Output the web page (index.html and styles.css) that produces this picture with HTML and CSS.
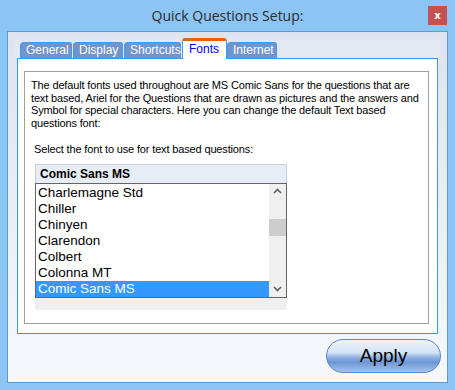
FILE: index.html
```html
<!DOCTYPE html>
<html lang="en">
  <head>
    <meta charset="UTF-8" />
    <title>Quick Questions Setup</title>
    <link rel="stylesheet" href="styles.css">
  </head>
  <body>
    <div class="window">
      <div class="titlebar">
        <span></span>
        <h1 class="title">Quick Questions Setup:</h1>
        <button class="close-button">x</button>
      </div>
      <div class="client">
        <div class="tabs">
          <div class="tab tab-general">General</div>
          <div class="tab tab-display">Display</div>
          <div class="tab tab-shortcuts">Shortcuts</div>
          <div class="tab tab-fonts active">Fonts</div>
          <div class="tab tab-internet">Internet</div>
        </div>
        <div class="panel">
          <div class="group">
            <p class="intro">
              The default fonts used throughout are MS Comic Sans for the questions that are
              text based, Ariel for the Questions that are drawn as pictures and the answers and
              Symbol for special characters. Here you can change the default Text based
              questions font:
            </p>
            <div class="select-label">Select the font to use for text based questions:</div>
            <div class="font-picker">
              <div class="font-current">Comic Sans MS</div>
              <div class="font-list">
                <ul class="font-items">
                  <li>Charlemagne Std</li>
                  <li>Chiller</li>
                  <li>Chinyen</li>
                  <li>Clarendon</li>
                  <li>Colbert</li>
                  <li>Colonna MT</li>
                  <li class="selected">Comic Sans MS</li>
                </ul>
                <div class="scrollbar">
                  <svg class="arrow" width="17" height="16" viewBox="0 0 17 16">
                    <path d="M5 9 L8.5 5.5 L12 9" fill="none" stroke="#606060" stroke-width="1.6" />
                  </svg>
                  <div class="track">
                    <div class="thumb"></div>
                  </div>
                  <svg class="arrow" width="17" height="16" viewBox="0 0 17 16">
                    <path d="M5 6 L8.5 9.5 L12 6" fill="none" stroke="#606060" stroke-width="1.6" />
                  </svg>
                </div>
              </div>
              <div class="font-footer"></div>
            </div>
          </div>
        </div>
        <div class="actions">
          <button class="apply-button">Apply</button>
        </div>
      </div>
    </div>
  </body>
</html>
```

FILE: styles.css
```css
* {
  margin: 0;
  padding: 0;
  box-sizing: border-box;
}

body {
  font-family: "Liberation Sans", Arial, sans-serif;
  background-color: #8cc4f4;
  width: 455px;
  height: 390px;
  overflow: hidden;
}

.window {
  width: 455px;
  height: 390px;
  background-color: #8cc4f4;
  padding: 0 7px;
}

.titlebar {
  height: 31px;
  display: grid;
  grid-template-columns: 1fr auto 1fr;
  align-items: start;
}

.title {
  font-family: "Open Sans", "Liberation Sans", sans-serif;
  font-weight: normal;
  font-size: 14px;
  color: #2b2b2b;
  margin-top: 6px;
}

.close-button {
  justify-self: end;
  width: 19px;
  height: 19px;
  margin-top: 6px;
  margin-right: 1px;
  border: none;
  background-color: #c75050;
  color: white;
  font-family: "DejaVu Sans", sans-serif;
  font-weight: bold;
  font-size: 10px;
  line-height: 17px;
}

.client {
  height: 352px;
  border: 1px solid #5f9bd2;
  background: linear-gradient(#dce4f0, #e6ecf5 40%, #f6f8fc);
  padding: 0 9px;
}

.tabs {
  display: flex;
  align-items: flex-end;
  height: 20px;
  margin: 6px -2px 0 -2px;
  padding: 0 2px 0 5px;
  background-color: #e3e9f3;
}

.tab {
  height: 16px;
  margin-right: 1px;
  padding: 0 5px;
  background-color: #7094cb;
  border: 1px solid #3e9cf6;
  border-bottom: none;
  border-radius: 4px 3px 0 0;
  color: white;
  font-size: 12px;
  line-height: 15px;
}

.tab-general {
  width: 52px;
}

.tab-display {
  width: 50px;
}

.tab-shortcuts {
  width: 57px;
}

.tab-fonts {
  width: 45px;
}

.tab-internet {
  width: 50px;
}

.tab.active {
  height: 21px;
  margin-bottom: -1px;
  margin-right: 0;
  background-color: white;
  color: #0000ff;
  border-top: 3px solid #e0650c;
  border-radius: 3px 3px 0 0;
  line-height: 17px;
  padding-left: 6px;
  position: relative;
  z-index: 1;
}

.panel {
  height: 276px;
  background-color: white;
  border: 1px solid #3399ff;
  padding: 12px 8px 10px 6px;
}

.group {
  height: 253px;
  border: 1px solid #a0a0a0;
  padding: 7px 6px 0 6px;
}

.intro {
  font-size: 11px;
  line-height: 12.7px;
  color: #000;
  letter-spacing: -0.15px;
}

.select-label {
  font-size: 11px;
  color: #000;
  margin-top: 13px;
  margin-left: 3px;
  letter-spacing: -0.15px;
}

.font-picker {
  width: 252px;
  margin-top: 9px;
  margin-left: 4px;
}

.font-current {
  height: 19px;
  background-color: #e6edf6;
  border: 1px solid #c8d0dc;
  border-bottom: none;
  font-size: 12px;
  font-weight: bold;
  line-height: 18px;
  padding-left: 4px;
  color: #000;
}

.font-list {
  height: 115px;
  display: flex;
  border: 1px solid #646464;
  background-color: white;
}

.font-items {
  list-style: none;
  flex: 1;
  padding-top: 1px;
}

.font-items li {
  height: 16px;
  font-size: 13.5px;
  line-height: 16px;
  padding-left: 2px;
  color: #000;
}

.font-items li.selected {
  background-color: #3399ff;
  color: white;
}

.scrollbar {
  width: 17px;
  display: flex;
  flex-direction: column;
  background-color: #efefef;
}

.track {
  flex: 1;
  padding-top: 19px;
}

.thumb {
  height: 17px;
  background-color: #cdcdcd;
}

.font-footer {
  height: 12px;
  background-color: #f0f0f0;
}

.actions {
  display: flex;
  justify-content: flex-end;
  padding-top: 5px;
  margin-right: -3px;
}

.apply-button {
  width: 115px;
  height: 34px;
  border: 1px solid #5a88cc;
  border-radius: 17px;
  background: linear-gradient(#eef4fc 0%, #d3e2f5 40%, #8eb0e2 55%, #6c97d6 70%, #a8c3ea 100%);
  font-family: "Liberation Sans", Arial, sans-serif;
  font-size: 19px;
  color: #000;
}
```
